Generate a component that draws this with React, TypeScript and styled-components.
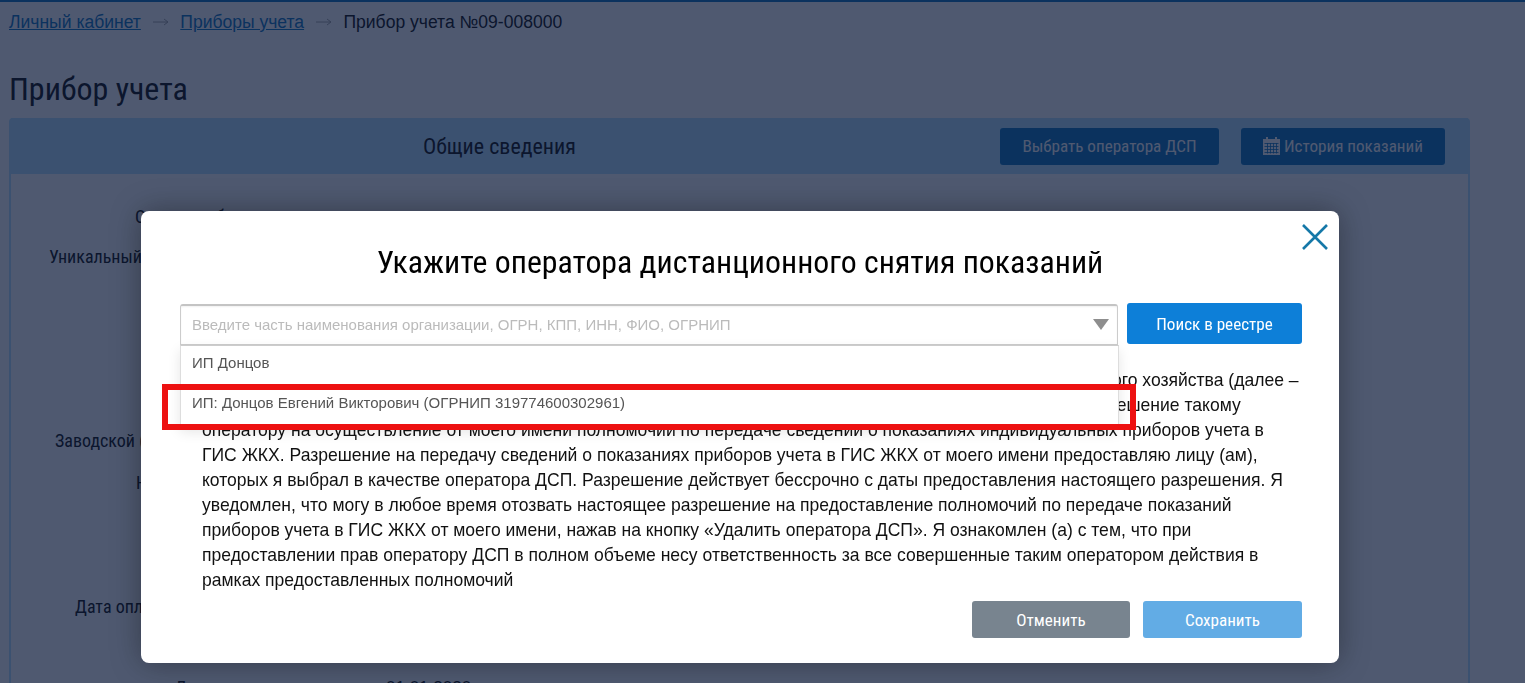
import React from "react";
import styled, { createGlobalStyle } from "styled-components";

const NARROW = `"Roboto Condensed", "Liberation Sans Narrow", Roboto, sans-serif`;
const SANS = `"Liberation Sans", Arial, sans-serif`;

const GlobalStyle = createGlobalStyle`
  html, body {
    margin: 0;
    height: 100%;
    overflow: hidden;
    background: #fff;
    font-family: ${SANS};
    color: #212121;
  }
  * { box-sizing: border-box; }
`;

// Page behind the dialog
const Page = styled.div`
  height: 683px;
  overflow: hidden;
  padding: 0 9px;
  border-top: 2px solid #1b7cc4;
`;

const Breadcrumbs = styled.nav`
  display: flex;
  align-items: center;
  height: 40px;
  font-size: 17.55px;
`;

const Crumb = styled.a`
  color: #1b7cc4;
  text-decoration: underline;
`;

const Arrow = styled.svg`
  width: 16px;
  height: 10px;
  margin: 0 11.7px;
  color: #aaa;
`;

const PageTitle = styled.h1`
  margin: 26px 0 8px;
  font-family: ${NARROW};
  font-weight: 400;
  font-size: 32px;
  line-height: 42px;
`;

const Panel = styled.section`
  width: 1461px;
  height: 600px;
  border: 2px solid #bce4fe;
  border-top: 0;
  border-radius: 4px;
`;

const PanelHeader = styled.header`
  display: flex;
  align-items: center;
  height: 56px;
  background: #bce4fe;
  padding: 0 23px 0 0;
  font-family: ${NARROW};
`;

const PanelTitle = styled.h2`
  margin: 0 0 0 412px;
  font-size: 22px;
  font-weight: 400;
  flex: 1;
`;

const HeaderButton = styled.button<{ $width: number }>`
  display: flex;
  align-items: center;
  justify-content: center;
  gap: 4px;
  width: ${(p) => p.$width}px;
  height: 37px;
  margin-left: 22px;
  border: 0;
  border-radius: 3px;
  background: #1b7cc4;
  color: #fff;
  font-family: ${NARROW};
  font-size: 17.1px;
`;

const Row = styled.div<{ $gap: number; $left: number }>`
  margin-top: ${(p) => p.$gap}px;
  padding-left: ${(p) => p.$left}px;
  display: flex;
  font-family: ${NARROW};
  font-size: 18px;
  line-height: 22px;
  white-space: nowrap;
`;

const RowValue = styled.span`
  margin-left: 108px;
  font-family: ${SANS};
  font-size: 17px;
`;

// Dialog
const Overlay = styled.div`
  position: fixed;
  inset: 0;
  background: rgba(4, 19, 51, 0.7);
`;

const Modal = styled.div`
  position: relative;
  width: 1198px;
  height: 452px;
  margin: 211px 0 0 141px;
  padding: 30px 37px 0 39px;
  background: #fff;
  border-radius: 8px;
  box-shadow: 0 0 30px rgba(0, 0, 0, 0.35);
`;

const CloseButton = styled.button`
  position: absolute;
  top: 12px;
  right: 10px;
  width: 28px;
  height: 28px;
  padding: 0;
  border: 0;
  background: none;
  color: #1578a8;
`;

const ModalTitle = styled.h2`
  margin: 0;
  padding-right: 2px;
  text-align: center;
  font-family: ${NARROW};
  font-weight: 400;
  font-size: 31.8px;
  line-height: 42px;
  color: #000;
`;

const SearchRow = styled.div`
  position: relative;
  display: flex;
  gap: 9px;
  margin-top: 20px;
`;

const SelectBox = styled.div`
  flex: 1;
  display: flex;
  align-items: center;
  justify-content: space-between;
  height: 41px;
  margin-top: 1px;
  padding: 0 8px 2px 11px;
  border: 1px solid #ccc;
  border-top: 2px solid #c4c4c4;
  border-radius: 3px 3px 0 0;
  box-shadow: inset 0 1px 2px rgba(0, 0, 0, 0.06);
  font-size: 15px;
  color: #bbb;
`;

const Caret = styled.span`
  width: 0;
  height: 0;
  border-left: 8px solid transparent;
  border-right: 8px solid transparent;
  border-top: 11px solid #8e8e8e;
`;

const SearchButton = styled.button`
  width: 175px;
  height: 41px;
  border: 0;
  border-radius: 3px;
  background: #0d7fd8;
  color: #fff;
  font-family: ${NARROW};
  font-size: 17.1px;
`;

const Dropdown = styled.ul`
  position: absolute;
  z-index: 2;
  top: 42px;
  left: 0;
  width: 939px;
  margin: 0;
  padding: 0;
  list-style: none;
  background: #fff;
  border: 1px solid #ddd;
  border-top: 1px solid #ccc;
  box-shadow: 0 5px 12px rgba(0, 0, 0, 0.1);
`;

const Option = styled.li`
  height: 40px;
  padding: 0 11px 8px;
  display: flex;
  align-items: center;
  font-size: 15px;
  color: #555;
`;

const Highlight = styled.div`
  position: absolute;
  z-index: 3;
  top: 173px;
  left: 21px;
  width: 974px;
  height: 46px;
  border: 6px solid #ed1111;
`;

const Consent = styled.div`
  margin: 23px 0 0 22px;
  font-size: 17.56px;
  line-height: 25px;
  color: #111;
`;

const ConsentLine = styled.p`
  margin: 0;
  white-space: nowrap;
`;

const Footer = styled.div`
  position: absolute;
  right: 37px;
  bottom: 25px;
  display: flex;
  gap: 13px;
`;

const FooterButton = styled.button<{ $bg: string; $width: number }>`
  width: ${(p) => p.$width}px;
  height: 37px;
  border: 0;
  border-radius: 3px;
  background: ${(p) => p.$bg};
  color: #fff;
  font-family: ${NARROW};
  font-size: 17.1px;
`;

const consentLines = [
  "Настоящим я подтверждаю выбор агентов в государственной информационной системе жилищно-коммунального хозяйства (далее –",
  "ГИС ЖКХ) данного оператора дистанционного снятия показаний (далее – оператор ДСП), и предоставляю разрешение такому",
  "оператору на осуществление от моего имени полномочий по передаче сведений о показаниях индивидуальных приборов учета в",
  "ГИС ЖКХ. Разрешение на передачу сведений о показаниях приборов учета в ГИС ЖКХ от моего имени предоставляю лицу (ам),",
  "которых я выбрал в качестве оператора ДСП. Разрешение действует бессрочно с даты предоставления настоящего разрешения. Я",
  "уведомлен, что могу в любое время отозвать настоящее разрешение на предоставление полномочий по передаче показаний",
  "приборов учета в ГИС ЖКХ от моего имени, нажав на кнопку «Удалить оператора ДСП». Я ознакомлен (а) с тем, что при",
  "предоставлении прав оператору ДСП в полном объеме несу ответственность за все совершенные таким оператором действия в",
  "рамках предоставленных полномочий",
];

const BreadcrumbArrow = () => (
  <Arrow viewBox="0 0 16 10" fill="none" stroke="currentColor" strokeWidth="1">
    <path d="M0 5h15M11 2l4 3-4 3" />
  </Arrow>
);

const CalendarIcon = () => (
  <svg width="17" height="18" viewBox="0 0 17 18" fill="currentColor">
    <path d="M3 0h2v2h7V0h2v2h3v16H0V2h3z" />
    <g fill="#1b7cc4">
      <rect x="1.5" y="6" width="14" height="0.8" />
      <rect x="1.5" y="9" width="14" height="0.8" />
      <rect x="1.5" y="12" width="14" height="0.8" />
      <rect x="1.5" y="15" width="14" height="0.8" />
      <rect x="4" y="6" width="0.8" height="10.5" />
      <rect x="7" y="6" width="0.8" height="10.5" />
      <rect x="10" y="6" width="0.8" height="10.5" />
      <rect x="13" y="6" width="0.8" height="10.5" />
    </g>
  </svg>
);

const App = () => {
  return (
    <>
      <GlobalStyle />
      <Page>
        <Breadcrumbs>
          <Crumb>Личный кабинет</Crumb>
          <BreadcrumbArrow />
          <Crumb>Приборы учета</Crumb>
          <BreadcrumbArrow />
          <span>Прибор учета №09-008000</span>
        </Breadcrumbs>
        <PageTitle>Прибор учета</PageTitle>
        <Panel>
          <PanelHeader>
            <PanelTitle>Общие сведения</PanelTitle>
            <HeaderButton $width={219}>Выбрать оператора ДСП</HeaderButton>
            <HeaderButton $width={204}>
              <CalendarIcon />
              История показаний
            </HeaderButton>
          </PanelHeader>
          <Row $gap={32} $left={124}>Статус прибора учета</Row>
          <Row $gap={18} $left={38}>Уникальный номер прибора учета в системе</Row>
          <Row $gap={162} $left={44}>Заводской (серийный) номер прибора</Row>
          <Row $gap={20} $left={125}>Номер</Row>
          <Row $gap={102} $left={64}>Дата опломбирования прибора</Row>
          <Row $gap={59} $left={164}>
            Дата поверки<RowValue>01.01.2020</RowValue>
          </Row>
        </Panel>
      </Page>
      <Overlay>
        <Modal>
          <CloseButton aria-label="Закрыть">
            <svg width="28" height="28" viewBox="0 0 28 28" fill="none" stroke="currentColor" strokeWidth="2.6">
              <path d="M2 2l24 24M26 2L2 26" />
            </svg>
          </CloseButton>
          <ModalTitle>Укажите оператора дистанционного снятия показаний</ModalTitle>
          <SearchRow>
            <SelectBox>
              Введите часть наименования организации, ОГРН, КПП, ИНН, ФИО, ОГРНИП
              <Caret />
            </SelectBox>
            <SearchButton>Поиск в реестре</SearchButton>
            <Dropdown>
              <Option>ИП Донцов</Option>
              <Option>ИП: Донцов Евгений Викторович (ОГРНИП 319774600302961)</Option>
            </Dropdown>
          </SearchRow>
          <Highlight />
          <Consent>
            {consentLines.map((line) => (
              <ConsentLine key={line}>{line}</ConsentLine>
            ))}
          </Consent>
          <Footer>
            <FooterButton $bg="#78848f" $width={158}>Отменить</FooterButton>
            <FooterButton $bg="#62ace5" $width={159}>Сохранить</FooterButton>
          </Footer>
        </Modal>
      </Overlay>
    </>
  );
};

export default App;
